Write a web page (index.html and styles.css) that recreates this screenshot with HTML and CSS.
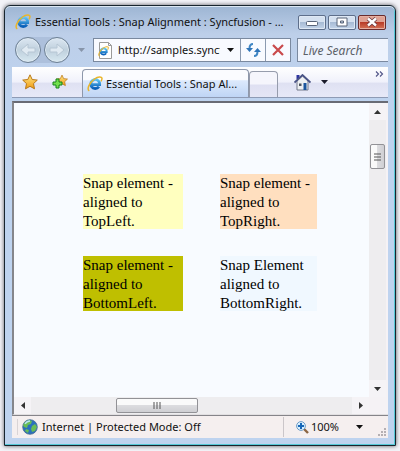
FILE: index.html
```html
<!DOCTYPE html>
<html lang="en">
<head>
<meta charset="utf-8">
<title>Essential Tools : Snap Alignment : Syncfusion</title>
<link rel="stylesheet" href="styles.css">
</head>
<body>
<svg class="defs" aria-hidden="true">
  <defs>
    <linearGradient id="blue" x1="0" y1="0" x2="0" y2="1"><stop offset="0" stop-color="#5cc4f4"/><stop offset="1" stop-color="#0a5fb8"/></linearGradient>
    <linearGradient id="gold" x1="0" y1="0" x2="0" y2="1"><stop offset="0" stop-color="#ffe88a"/><stop offset="1" stop-color="#f09a10"/></linearGradient>
    <symbol id="ie" viewBox="0 0 16 16">
      <path d="M11.9 10.6A4.5 4.5 0 1 1 12.7 8.6H4.6" fill="none" stroke="url(#blue)" stroke-width="2.8"/>
      <path d="M2.3 14.8C-.6 13.200 2.500 6.500 7.500 3C11 .5 15 .2 15 2.600C15 3.500 14.600 4.500 14 5.400" fill="none" stroke="#e9b52c" stroke-width="1.500"/>
    </symbol>
    <symbol id="star" viewBox="0 0 16 16">
      <path d="M8 .8l2.200 4.700 5.100.6-3.800 3.500 1 5.200L8 12.300l-4.500 2.500 1-5.200L.7 6.100l5.100-.6z" fill="url(#gold)" stroke="#b97818" stroke-linejoin="round"/>
    </symbol>
  </defs>
</svg>
<div class="window">
  <header class="titlebar">
    <svg class="icon"><use href="#ie"/></svg>
    <h1 class="title">Essential Tools : Snap Alignment : Syncfusion - ...</h1>
    <div class="controls">
      <button class="control" aria-label="Minimize"><svg width="12" height="10" viewBox="0 0 12 10"><rect x=".5" y="4.500" width="11" height="4" rx="1" fill="#fff" stroke="#596579"/></svg></button>
      <button class="control" aria-label="Maximize"><svg width="12" height="10" viewBox="0 0 12 10"><path d="M1 1h10v8H1zM4.500 4v2h3V4z" fill="#fff" fill-rule="evenodd" stroke="#596579"/></svg></button>
      <button class="control close" aria-label="Close"><svg width="12" height="10" viewBox="0 0 12 10"><path d="M2 1.500l8 7M10 1.500l-8 7" stroke="#68383f" stroke-width="4"/><path d="M2 1.500l8 7M10 1.500l-8 7" stroke="#fff" stroke-width="2.400"/></svg></button>
    </div>
  </header>

  <nav class="navbar">
    <div class="travel">
      <button class="round" aria-label="Back"><svg width="18" height="16" viewBox="0 0 18 16"><path d="M2 8l7-6v4h7v4H9v4z" fill="#e0eaf2" stroke="#b6c6d4"/></svg></button>
      <button class="round" aria-label="Forward"><svg width="18" height="16" viewBox="0 0 18 16"><path d="M16 8L9 2v4H2v4h7v4z" fill="#e0eaf2" stroke="#b6c6d4"/></svg></button>
    </div>
    <button class="plain history" aria-label="Recent pages"><svg width="7" height="4" viewBox="0 0 7 4"><path d="M0 0h7L3.500 4z" fill="#8795aa"/></svg></button>
    <div class="address">
      <svg class="page" width="15" height="17" viewBox="0 0 15 17"><path d="M1.500.5h9l3 3v13h-12z" fill="#fff" stroke="#9a9a9a"/><path d="M10.500.5v3h3" fill="none" stroke="#9a9a9a"/><use href="#ie" x="0" y="4" width="11" height="11"/></svg>
      <input class="url" type="text" value="http://samples.syncfusion.com" aria-label="Address">
      <button class="plain drop" aria-label="Show addresses"><svg width="7" height="4" viewBox="0 0 7 4"><path d="M0 0h7L3.500 4z" fill="#111"/></svg></button>
      <button class="plain cell" aria-label="Refresh"><svg width="15" height="14" viewBox="0 0 15 14"><path d="M7 1C4 1 3.500 3 3.500 5.500M8 13c3 0 3.500-2 3.500-4.500" fill="none" stroke="#3f86c4" stroke-width="2"/><path d="M0 5h7L3.500 9zM8 9h7l-3.500-4z" fill="#2f74b8"/></svg></button>
      <button class="plain cell" aria-label="Stop"><svg width="12" height="12" viewBox="0 0 12 12"><path d="M1 1l10 10M11 1L1 11" stroke="#c9494b" stroke-width="2.200"/></svg></button>
    </div>
    <input class="search" type="text" placeholder="Live Search" aria-label="Live Search">
  </nav>

  <div class="tabbar">
    <div class="favorites">
      <button class="plain" aria-label="Favorites"><svg class="icon"><use href="#star"/></svg></button>
      <button class="plain" aria-label="Add to favorites"><svg class="icon" viewBox="0 0 16 16"><use href="#star" x="4" y="0" width="12" height="13"/><path d="M4 5h3v3h3v3H7v3H4v-3H1V8h3z" fill="#72e04c" stroke="#16831c"/></svg></button>
    </div>
    <a class="tab" href="#page"><svg class="icon"><use href="#ie"/></svg><span class="tabtext">Essential Tools : Snap Al...</span></a>
    <button class="newtab" aria-label="New tab"></button>
    <div class="commands">
      <button class="plain" aria-label="Home"><svg width="17" height="17" viewBox="0 0 17 17"><path d="M3 7v9h11V7L8.500 2z" fill="#eef0f2" stroke="#72788a"/><path d="M2.500 1h3v4h-3z" fill="#2e35a0"/><path d="M.5 8.500L8.500 1l8 7.500" fill="none" stroke="#4a5486" stroke-width="1.800"/><path d="M9.500 9h3v7h-3z" fill="#1d569d"/><path d="M5 9.500h2.500V12H5z" fill="#4d535f"/></svg></button>
      <button class="plain" aria-label="Home options"><svg width="7" height="4" viewBox="0 0 7 4"><path d="M0 0h7L3.500 4z" fill="#1b1b2b"/></svg></button>
      <button class="plain more" aria-label="More commands"><svg width="9" height="6" viewBox="0 0 9 6"><path d="M1 .5L3.500 3 1 5.500M5 .5L7.500 3 5 5.500" fill="none" stroke="#54588a" stroke-width="1.200"/></svg></button>
    </div>
  </div>

  <div class="view">
    <main class="page-body" id="page">
      <div class="snaps">
        <div class="snap yellow">Snap element - aligned to TopLeft.</div>
        <div class="snap peach">Snap element - aligned to TopRight.</div>
        <div class="snap olive">Snap element - aligned to BottomLeft.</div>
        <div class="snap pale">Snap Element aligned to BottomRight.</div>
      </div>
    </main>
    <div class="vscroll">
      <button class="plain arrow" aria-label="Scroll up"><svg width="7" height="4" viewBox="0 0 7 4"><path d="M0 4h7L3.500 0z" fill="#333"/></svg></button>
      <div class="vtrack"><div class="vthumb"><svg width="7" height="8" viewBox="0 0 7 8"><path d="M0 1h7M0 4h7M0 7h7" stroke="#555"/></svg></div></div>
      <button class="plain arrow" aria-label="Scroll down"><svg width="7" height="4" viewBox="0 0 7 4"><path d="M0 0h7L3.500 4z" fill="#333"/></svg></button>
    </div>
    <div class="hscroll">
      <button class="plain arrow" aria-label="Scroll left"><svg width="4" height="7" viewBox="0 0 4 7"><path d="M4 0v7L0 3.500z" fill="#333"/></svg></button>
      <div class="htrack"><div class="hthumb"><svg width="8" height="7" viewBox="0 0 8 7"><path d="M1 0v7M4 0v7M7 0v7" stroke="#555"/></svg></div></div>
      <button class="plain arrow" aria-label="Scroll right"><svg width="4" height="7" viewBox="0 0 4 7"><path d="M0 0v7l4-3.500z" fill="#333"/></svg></button>
    </div>
  </div>

  <footer class="status">
    <div class="zone">
      <svg width="16" height="16" viewBox="0 0 16 16"><circle cx="8" cy="8" r="7.300" fill="#2b70bd" stroke="#466d91" stroke-width=".8"/><path d="M3 3l4-2 3 1-1 3-3 1-1 3-3-1-1-2zM10 7l3-2 2 3-2 4-3 1-1-3zM4 10l3 1-1 3-3-2z" fill="#69bd55"/><path d="M3 5q2-3 5-3" fill="none" stroke="#b9e6f4" stroke-width="1.300"/></svg>
      <span>Internet | Protected Mode: Off</span>
    </div>
    <button class="plain zoom">
      <svg width="13" height="13" viewBox="0 0 13 13"><path d="M8 8l4 4" stroke="#8a6542" stroke-width="2.400"/><circle cx="5" cy="5" r="4.400" fill="#d8efff" stroke="#6c9bc5"/><path d="M5 2v6M2 5h6" stroke="#1767b8" stroke-width="2"/></svg>
      <span>100%</span>
      <svg class="zoomarrow" width="7" height="4" viewBox="0 0 7 4"><path d="M0 0h7L3.500 4z" fill="#111"/></svg>
    </button>
    <svg class="grip" width="9" height="9" viewBox="0 0 9 9"><path d="M7 0h2v2H7zM7 3h2v2H7zM7 6h2v2H7zM4 3h2v2H4zM4 6h2v2H4zM1 6h2v2H1z" fill="#b5b0b3"/></svg>
  </footer>
</div>
</body>
</html>
```
FILE: styles.css
```css
* {
  box-sizing: border-box;
}

body {
  margin: 0;
  min-height: 100vh;
  display: flex;
  padding: 5px 4px;
  background: #f3f3f8;
  font: 11px/16px "Noto Sans", "Open Sans", sans-serif;
  color: #111;
}

svg {
  display: block;
  flex: none;
}

button,
input {
  font: inherit;
  color: inherit;
}

.defs {
  position: absolute;
  width: 0;
  height: 0;
}

.icon {
  width: 16px;
  height: 16px;
}

.plain {
  display: flex;
  align-items: center;
  justify-content: center;
  padding: 0;
  border: 0;
  background: none;
}

.window {
  flex: 1;
  min-width: 0;
  display: flex;
  flex-direction: column;
  padding: 0 7px 7px;
  border: 1px solid #18252f;
  border-radius: 6px 6px 0 0;
  background: linear-gradient(#9db5d3, #bdcfe9 28px, #bed3ef 90px, #bed3ef);
  box-shadow: inset 0 1px #dce8f4, inset -1px -1px #55c8d6, 0 0 4px #55555d;
}

.titlebar {
  display: flex;
  align-items: center;
  gap: 4px;
  height: 27px;
  padding: 5px 2px 0 3px;
}

.title {
  flex: 1;
  min-width: 0;
  margin: 0;
  overflow: hidden;
  font-size: 11px;
  font-weight: 400;
  white-space: nowrap;
}

.controls {
  display: flex;
  gap: 2px;
}

.control {
  display: flex;
  align-items: center;
  justify-content: center;
  width: 28px;
  height: 15px;
  padding: 0;
  border: 1px solid #5e6f8b;
  border-radius: 2px;
  background: linear-gradient(#d5e1f0 45%, #a7bbd5 50%, #c4d5ea);
  box-shadow: inset 0 0 0 1px #dfe9f5;
}

.control.close {
  border-color: #6a2c2d;
  background: linear-gradient(#dfa193 45%, #b93d29 50%, #d57357);
  box-shadow: inset 0 0 0 1px #e6b0a2;
}

.navbar {
  display: flex;
  align-items: center;
  height: 34px;
  padding-left: 3px;
}

.travel {
  display: flex;
  gap: 3px;
  border-radius: 13px;
  background: #adc0dc;
}

.round {
  display: flex;
  align-items: center;
  justify-content: center;
  width: 26px;
  height: 26px;
  padding: 0;
  border: 1px solid #6e8194;
  border-radius: 50%;
  background: linear-gradient(#dce7f2, #bfd0dd 50%, #d7e8f0);
  box-shadow: inset 0 0 0 1px #dfeaf4;
}

.history {
  width: 23px;
  height: 24px;
}

.address {
  flex: 1;
  min-width: 0;
  display: flex;
  align-items: center;
  height: 24px;
  padding-left: 4px;
  border: 1px solid #7a899f;
  background: #f8faff;
}

.url {
  flex: 1;
  min-width: 0;
  margin-left: 5px;
  padding: 0;
  border: 0;
  background: none;
}

.drop {
  width: 20px;
  height: 22px;
}

.cell {
  width: 25px;
  height: 22px;
  border-left: 1px solid #8b9ab0;
}

.search {
  width: 91px;
  height: 24px;
  margin-left: 6px;
  padding: 0 5px;
  border: 1px solid #7a899f;
  border-right: 0;
  border-radius: 0;
  background: #eef3fd;
  font-size: 12px;
  font-style: italic;
}

.search::placeholder {
  color: #5c6168;
  opacity: 1;
}

.tabbar {
  display: flex;
  height: 31px;
  border-bottom: 1px solid #8e9bb5;
  background: linear-gradient(#fff, #f0f1fb 50%, #dfe1f2 54%, #e7e9f8);
}

.favorites {
  display: flex;
  align-items: center;
  justify-content: center;
  gap: 14px;
  width: 70px;
  padding-right: 4px;
}

.tab {
  display: flex;
  align-items: center;
  gap: 3px;
  width: 167px;
  margin-top: 2px;
  padding: 0 4px;
  border: 1px solid #8e98ab;
  border-bottom: 0;
  border-radius: 4px 4px 0 0;
  background: linear-gradient(#fbfcff 35%, #dce9fc 40%, #bfd5f5);
  color: inherit;
  text-decoration: none;
}

.tabtext {
  white-space: nowrap;
}

.newtab {
  width: 29px;
  margin-top: 4px;
  padding: 0;
  border: 1px solid #969cac;
  border-bottom: 0;
  border-radius: 4px 4px 0 0;
  background: linear-gradient(#f5f5fc 48%, #dfe0f2 52%, #e4e6f5);
}

.commands {
  flex: 1;
  display: flex;
  align-items: center;
  gap: 10px;
  padding: 0 4px 0 16px;
}

.more {
  align-self: flex-start;
  margin: 4px 0 0 auto;
}

.view {
  flex: 1;
  display: grid;
  grid-template-columns: minmax(0, 1fr) 17px;
  grid-template-rows: minmax(0, 1fr) 17px;
  margin-top: 3px;
  padding-right: 2px;
  border-top: 2px solid #696b75;
  border-left: 2px solid #85868b;
  border-bottom: 1px solid #e1dfe1;
  background: #f5f2f5;
}

.page-body {
  padding: 71px 0 0 69px;
  background: #f8fbff;
}

.snaps {
  display: grid;
  grid-template-columns: 100px 97px;
  gap: 27px 37px;
}

.snap {
  height: 55px;
  overflow: hidden;
  font: 15px/19px "Liberation Serif", "Times New Roman", serif;
  color: #000;
}

.yellow { background: #ffffbf; }
.peach { background: #ffdfbf; }
.olive { background: #bfbf00; }
.pale { background: #f0f8ff; }

.vscroll,
.hscroll {
  display: flex;
  background: #eeedef;
}

.vscroll {
  flex-direction: column;
}

.arrow {
  width: 17px;
  height: 17px;
  background: #f5f3f6;
}

.vtrack,
.htrack {
  flex: 1;
}

.vtrack {
  padding: 24px 1px 0;
}

.htrack {
  padding: 1px 0 1px 85px;
}

.vthumb,
.hthumb {
  display: flex;
  align-items: center;
  justify-content: center;
  border: 1px solid #929296;
  border-radius: 2px;
}

.vthumb {
  height: 25px;
  background: linear-gradient(90deg, #fafafa 45%, #dcdcdf 50%, #cfcfd3);
}

.hthumb {
  width: 82px;
  height: 15px;
  background: linear-gradient(#fafafa 45%, #dcdcdf 50%, #cfcfd3);
}

.status {
  display: flex;
  align-items: center;
  height: 23px;
  border-top: 1px solid #858489;
  background: #f5efef;
}

.zone {
  flex: 1;
  min-width: 0;
  display: flex;
  align-items: center;
  gap: 4px;
  margin-left: 5px;
  padding-left: 4px;
  border-left: 1px solid #d9d4d6;
  white-space: nowrap;
}

.zoom {
  gap: 2px;
  height: 20px;
  padding-left: 12px;
  border-left: 1px solid #cbc6c9;
}

.zoomarrow {
  margin-left: 15px;
}

.grip {
  align-self: flex-end;
  margin: 0 2px 1px 14px;
}
```
